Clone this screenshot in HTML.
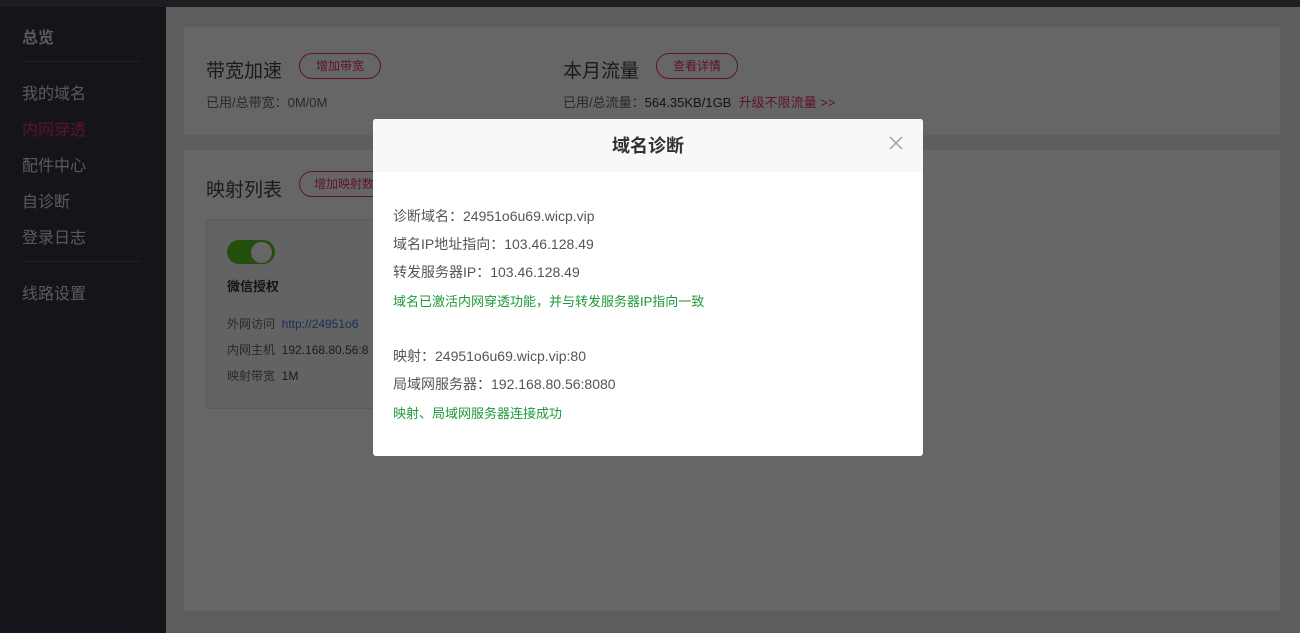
<!DOCTYPE html>
<html><head><meta charset="utf-8"><style>
*{margin:0;padding:0;box-sizing:border-box}
body{width:1300px;height:633px;overflow:hidden;background:#e8e8e8;font-family:"Liberation Sans","Noto Sans CJK SC",sans-serif;position:relative}
.top{position:absolute;left:0;top:0;width:1300px;height:7px;background:#4b4c55}
.side{position:absolute;left:0;top:7px;width:166px;height:626px;background:#323440}
.side div{position:absolute;left:22px;font-size:16px;color:#e0e0e2}
.side hr{position:absolute;left:22px;width:118px;border:0;border-top:1px solid #555864}
.card{position:absolute;background:#fff}
.abs{position:absolute;white-space:nowrap}
.btn{position:absolute;border:1px solid #e8336b;border-radius:14px;color:#e8336b;font-size:12px;text-align:center;line-height:24px;height:26px}
.mask{position:absolute;left:0;top:0;width:1300px;height:633px;background:rgba(0,0,0,0.6)}
.dlg{position:absolute;left:373px;top:119px;width:550px;height:337px;background:#fff;border-radius:3px}
.dh{height:53px;background:#f8f8f8;border-radius:3px 3px 0 0;text-align:center;font-size:18px;font-weight:bold;line-height:55px;color:#333}
.dl{position:absolute;left:20px;font-size:14px;color:#555;white-space:nowrap}
.g{color:#1f9a3a;font-size:13px}
</style></head><body>
<div class="top"></div>
<div class="side">
<div style="top:17px;font-weight:bold">总览</div>
<hr style="top:54px">
<div style="top:73px">我的域名</div>
<div style="top:109px;color:#e8336b">内网穿透</div>
<div style="top:145px">配件中心</div>
<div style="top:181px">自诊断</div>
<div style="top:217px">登录日志</div>
<hr style="top:254px">
<div style="top:273px">线路设置</div>
</div>
<div class="card" style="left:184px;top:27px;width:1096px;height:108px"></div>
<div class="card" style="left:184px;top:150px;width:1096px;height:461px"></div>
<div class="abs" style="left:206px;top:56px;font-size:19px;color:#444">带宽加速</div>
<div class="btn" style="left:299px;top:53px;width:82px">增加带宽</div>
<div class="abs" style="left:206px;top:92px;font-size:13px;color:#666">已用/总带宽：0M/0M</div>
<div class="abs" style="left:563px;top:56px;font-size:19px;color:#444">本月流量</div>
<div class="btn" style="left:656px;top:53px;width:82px">查看详情</div>
<div class="abs" style="left:563px;top:92px;font-size:13px;color:#666">已用/总流量：<span style="color:#333">564.35KB/1GB</span> <span style="color:#e8336b">&nbsp;升级不限流量 &gt;&gt;</span></div>
<div class="abs" style="left:206px;top:175px;font-size:19px;color:#444">映射列表</div>
<div class="btn" style="left:299px;top:171px;width:90px">增加映射数</div>
<div class="abs" style="left:206px;top:219px;width:180px;height:190px;border:1px solid #e2e2e2;background:#f8f8f8"></div>
<div class="abs" style="left:227px;top:240px;width:48px;height:24px;border-radius:12px;background:#5bc21c"></div>
<div class="abs" style="left:251px;top:242px;width:21px;height:21px;border-radius:50%;background:#fff"></div>
<div class="abs" style="left:227px;top:276px;font-size:13px;font-weight:bold;color:#333">微信授权</div>
<div class="abs" style="left:227px;top:315px;font-size:12px;color:#666">外网访问 &nbsp;<span style="color:#3a7bd5">http://24951o6</span></div>
<div class="abs" style="left:227px;top:341px;font-size:12px;color:#666">内网主机 &nbsp;<span style="color:#444">192.168.80.56:8</span></div>
<div class="abs" style="left:227px;top:367px;font-size:12px;color:#666">映射带宽 &nbsp;<span style="color:#444">1M</span></div>
<div class="mask"></div>
<div class="dlg">
<div class="dh">域名诊断</div>
<svg style="position:absolute;left:516px;top:17px" width="14" height="14"><path d="M1 1L13 13M13 1L1 13" stroke="#999" stroke-width="1.3"/></svg>
<div class="dl" style="top:87px">诊断域名：24951o6u69.wicp.vip</div>
<div class="dl" style="top:115px">域名IP地址指向：103.46.128.49</div>
<div class="dl" style="top:143px">转发服务器IP：103.46.128.49</div>
<div class="dl g" style="top:172px">域名已激活内网穿透功能，并与转发服务器IP指向一致</div>
<div class="dl" style="top:227px">映射：24951o6u69.wicp.vip:80</div>
<div class="dl" style="top:255px">局域网服务器：192.168.80.56:8080</div>
<div class="dl g" style="top:284px">映射、局域网服务器连接成功</div>
</div>
</body></html>
